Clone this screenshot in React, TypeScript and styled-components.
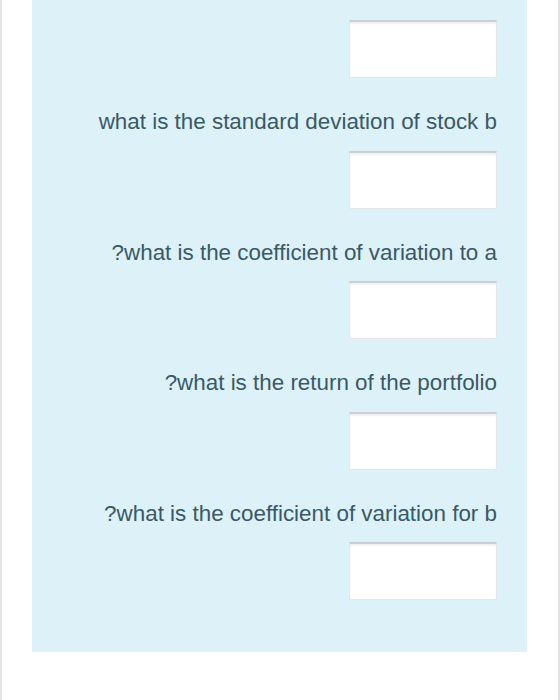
import React from "react";
import styled, { createGlobalStyle } from "styled-components";

const Global = createGlobalStyle`
  html, body { margin: 0; padding: 0; background: #ffffff; }
  body { font-family: "Liberation Sans", Arial, sans-serif; }
`;

const Page = styled.div`
  width: 560px;
  height: 700px;
  box-sizing: border-box;
  border-left: 2px solid #e6e6e6;
  border-right: 2px solid #e2e2e2;
  padding-left: 30px;
  padding-right: 31px;
  overflow: hidden;
`;

const Panel = styled.div`
  background: #ddf1f9;
  padding: 20px 30px 52px 0;
  display: flex;
  flex-direction: column;
  align-items: flex-end;
`;

const AnswerBox = styled.input`
  width: 148px;
  height: 58px;
  box-sizing: border-box;
  background: #ffffff;
  border: 1px solid #e4e8ea;
  border-top: 2px solid #c9cfd2;
  box-shadow: inset 0 2px 2px rgba(0, 0, 0, 0.06);
  outline: none;
  padding: 0 6px;
`;

const Question = styled.div`
  margin: 31px 0 15.5px;
  font-size: 22.4px;
  line-height: 26px;
  color: #3a5966;
  white-space: nowrap;
`;

const questions = [
  "what is the standard deviation of stock b",
  "?what is the coefficient of variation to a",
  "?what is the return of the portfolio",
  "?what is the coefficient of variation for b",
];

export default function App() {
  return (
    <>
      <Global />
      <Page>
        <Panel>
          <AnswerBox type="text" />
          {questions.map((q) => (
            <React.Fragment key={q}>
              <Question>{q}</Question>
              <AnswerBox type="text" />
            </React.Fragment>
          ))}
        </Panel>
      </Page>
    </>
  );
}
